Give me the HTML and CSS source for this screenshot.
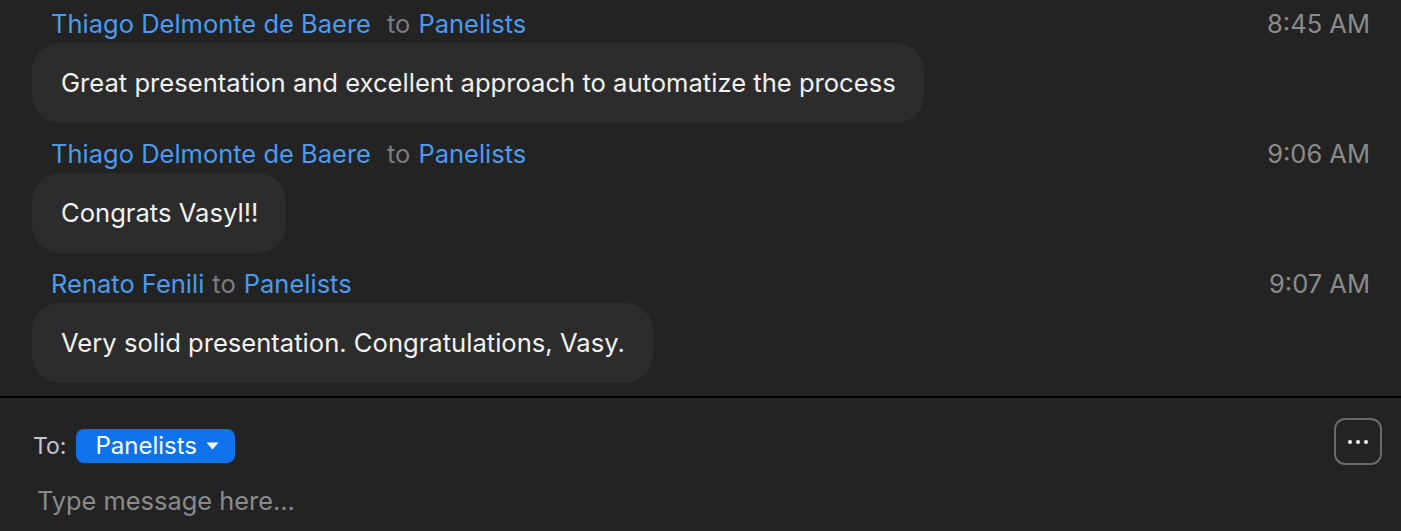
FILE: index.html
```html
<!DOCTYPE html>
<html lang="en">
<head>
<meta charset="utf-8">
<title>Chat</title>
<link rel="stylesheet" href="styles.css">
</head>
<body>
<div class="chat">
  <div class="messages">
    <div class="msg">
      <div class="msg-head">
        <div class="who"><span class="name">Thiago Delmonte de Baere</span><span class="to">to</span><span class="name">Panelists</span></div>
        <div class="time">8:45 AM</div>
      </div>
      <div class="bubble">Great presentation and excellent approach to automatize the process</div>
    </div>
    <div class="msg">
      <div class="msg-head">
        <div class="who"><span class="name">Thiago Delmonte de Baere</span><span class="to">to</span><span class="name">Panelists</span></div>
        <div class="time">9:06 AM</div>
      </div>
      <div class="bubble">Congrats Vasyl!!</div>
    </div>
    <div class="msg">
      <div class="msg-head">
        <div class="who"><span class="name">Renato Fenili</span><span class="to tight">to</span><span class="name">Panelists</span></div>
        <div class="time">9:07 AM</div>
      </div>
      <div class="bubble">Very solid presentation. Congratulations, Vasy.</div>
    </div>
  </div>
  <div class="composer">
    <div class="composer-top">
      <div class="recipient">
        <span class="to-label">To:</span>
        <button class="pill">Panelists<svg class="caret" width="13" height="8" viewBox="0 0 13 8"><path d="M0.5 0.5h12L6.5 7.5z" fill="#fff"/></svg></button>
      </div>
      <button class="more" aria-label="More"><span></span><span></span><span></span></button>
    </div>
    <div class="input">Type message here...</div>
  </div>
</div>
</body>
</html>
```
FILE: styles.css
```css
* { box-sizing: border-box; }
html, body { margin: 0; padding: 0; }
body {
  background: #232323;
  font-family: Inter, "Noto Sans", "Liberation Sans", sans-serif;
  width: 1401px;
  height: 531px;
  overflow: hidden;
}
.chat { display: flex; flex-direction: column; height: 531px; }
.messages {
  padding: 9px 31px 0 32px;
  height: 396px;
  display: flex;
  flex-direction: column;
  gap: 16px;
}
.msg { display: flex; flex-direction: column; align-items: flex-start; gap: 6px; }
.msg-head {
  width: 100%;
  height: 28px;
  display: flex;
  justify-content: space-between;
  align-items: center;
  font-size: 25.5px;
  padding-left: 19px;
}
.who { display: flex; align-items: center; white-space: nowrap; }
.name { color: #4a9bf1; }
.to { color: #7b7b83; margin: 0 8px 0 16px; }
.to.tight { margin: 0 8px 0 8px; }
.time { color: #8b8b8b; }
.bubble {
  background: #2c2c2c;
  color: #f2f2f2;
  font-size: 25.6px;
  height: 80px;
  line-height: 80px;
  padding: 0 28px 0 29px;
  border-radius: 28px;
  white-space: nowrap;
}
.composer {
  border-top: 2px solid #000;
  flex: 1;
  padding: 20px 19px 0 33px;
  display: flex;
  flex-direction: column;
}
.composer-top {
  display: flex;
  justify-content: space-between;
  align-items: center;
  height: 47px;
}
.recipient { display: flex; align-items: center; gap: 10px; margin-top: 8px; }
.to-label { color: #c4c4cf; font-size: 23px; }
.pill {
  background: #0e72ed;
  border: none;
  color: #fff;
  font-family: inherit;
  font-size: 24px;
  height: 34px;
  border-radius: 8px;
  padding: 0 16px 0 19px;
  display: flex;
  align-items: center;
  gap: 9px;
}
.caret { display: block; }
.more {
  width: 48px;
  height: 47px;
  border: 2px solid #6a6a6a;
  border-radius: 11px;
  background: transparent;
  display: flex;
  align-items: center;
  justify-content: center;
  gap: 4px;
  padding: 0;
}
.more span { width: 4px; height: 4px; border-radius: 50%; background: #fff; }
.input {
  color: #8b8b8b;
  font-size: 25.4px;
  margin-top: 20px;
  padding-left: 4px;
}
```
